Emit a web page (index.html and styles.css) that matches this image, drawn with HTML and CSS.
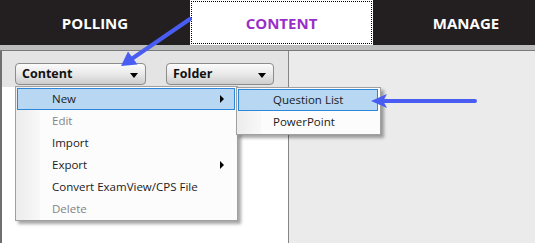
FILE: index.html
```html
<!DOCTYPE html>
<html lang="en">
<head>
  <meta charset="UTF-8">
  <title>Content</title>
  <link rel="stylesheet" href="styles.css">
</head>
<body>

<!-- Top tabs -->
<nav class="tabs">
  <div class="tab tab-polling">POLLING</div>
  <div class="tab tab-content active">CONTENT</div>
  <div class="tab tab-manage">MANAGE</div>
</nav>
<div class="separator"></div>

<!-- Panels -->
<main class="panels">
  <section class="left-panel">
    <div class="toolbar">
      <div class="dropdown dd-content">Content <span class="caret"></span></div>
      <div class="dropdown dd-folder">Folder <span class="caret"></span></div>
    </div>
  </section>
  <section class="right-panel"></section>
</main>

<!-- Context menu -->
<ul class="menu main-menu">
  <li class="item selected">New <span class="sub-arrow"></span></li>
  <li class="item disabled">Edit</li>
  <li class="item">Import</li>
  <li class="item">Export <span class="sub-arrow"></span></li>
  <li class="item">Convert ExamView/CPS File</li>
  <li class="item disabled">Delete</li>
</ul>

<ul class="menu sub-menu">
  <li class="item selected">Question List</li>
  <li class="item">PowerPoint</li>
</ul>

<!-- Annotation arrows -->
<svg class="arrows" width="535" height="243" viewBox="0 0 535 243">
  <line x1="190" y1="19" x2="133" y2="58" />
  <polygon points="121,66 137.5,64.5 128,51.5" />
  <line x1="475" y1="101" x2="382" y2="101" />
  <polygon points="371,101 387,94 383,101 387,108" />
</svg>

</body>
</html>
```

FILE: styles.css
```css
body {
  margin: 0;
  width: 535px;
  height: 243px;
  overflow: hidden;
  font-family: "Open Sans", "Noto Sans", sans-serif;
  background-color: #ebebeb;
}

.tabs {
  display: flex;
  height: 45px;
  background-color: #231f20;
}

.tab {
  display: flex;
  flex-shrink: 0;
  align-items: center;
  justify-content: center;
  color: #fff;
  font-weight: bold;
  font-size: 15px;
}

.tab-polling { width: 190px; }
.tab-content { width: 183px; }
.tab-manage  { width: 186px; }

.tab.active {
  background-color: #fff;
  color: #9a2fc8;
  outline: 1px dotted #000;
  outline-offset: -2px;
}

.separator {
  height: 5px;
  background-color: #bcbcbc;
  border-bottom: 1px solid #7a7a7a;
}

.panels {
  display: flex;
  height: 192px;
}

.left-panel {
  width: 286px;
  background-color: #fff;
  border-left: 2px solid #6f6f6f;
  border-right: 1px solid #858585;
}

.right-panel {
  flex: 1;
  background-color: #ebebeb;
}

.toolbar {
  display: flex;
  gap: 20px;
  padding: 12px 0 2px 13px;
  background-color: #e4e4e4;
}

.dropdown {
  position: relative;
  box-sizing: border-box;
  height: 22px;
  padding-left: 6px;
  line-height: 20px;
  font-size: 12.5px;
  font-weight: bold;
  color: #111;
  border: 1px solid #8c8c8c;
  border-radius: 4px;
  background: linear-gradient(#fbfbfb, #e9e9e9 50%, #cdcdcd);
}

.dd-content { width: 131px; }
.dd-folder  { width: 108px; }

.caret {
  position: absolute;
  right: 7px;
  top: 9px;
  border-left: 4px solid transparent;
  border-right: 4px solid transparent;
  border-top: 5px solid #000;
}

.menu {
  position: absolute;
  margin: 0;
  padding: 1px 2px 0 1px;
  list-style: none;
  font-size: 11.5px;
  color: #1b1b1b;
  border: 1px solid #a0a0a0;
  background: linear-gradient(to right, #ececec 0, #f8f8f8 24px, #fcfcfc 24px);
  box-shadow: 3px 3px 3px rgba(0, 0, 0, 0.35);
}

.main-menu {
  left: 15px;
  top: 86px;
  width: 218px;
}

.sub-menu {
  left: 236px;
  top: 87px;
  width: 140px;
  padding-bottom: 1px;
}

.item {
  position: relative;
  box-sizing: border-box;
  height: 22px;
  line-height: 20px;
  padding-left: 34px;
  border: 1px solid transparent;
}

.item.selected {
  background-color: #b7d7f3;
  border-color: #2e86d8;
}

.item.disabled {
  color: #838383;
}

.sub-arrow {
  position: absolute;
  right: 10px;
  top: 6px;
  border-top: 4px solid transparent;
  border-bottom: 4px solid transparent;
  border-left: 4px solid #000;
}

.arrows {
  position: absolute;
  left: 0;
  top: 0;
  pointer-events: none;
}

.arrows line {
  stroke: #4a5df2;
  stroke-width: 4;
  stroke-linecap: round;
}

.arrows polygon {
  fill: #4a5df2;
}
```
